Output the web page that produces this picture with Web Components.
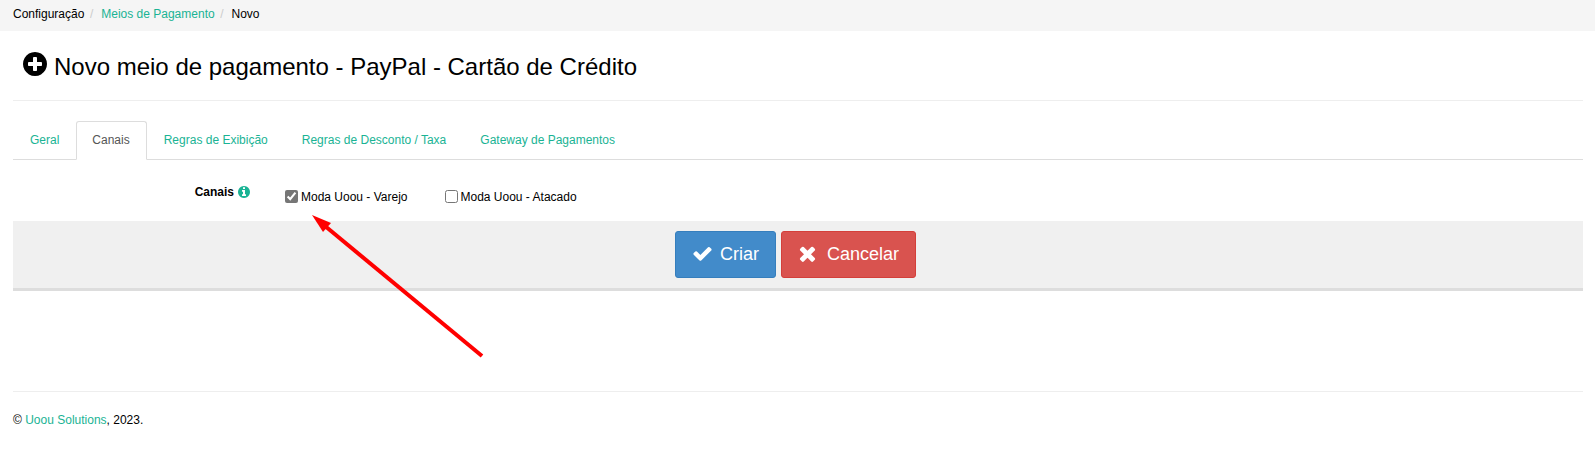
<!DOCTYPE html>
<html lang="pt-BR">
<head>
<meta charset="utf-8">
<title>Novo meio de pagamento</title>
<style>
  html, body { margin: 0; height: 100%; overflow: hidden; background: #fff; }
  body { position: relative; font: 12px/17px "Liberation Sans", Arial, sans-serif; color: #000; }
  .content { display: block; padding: 0 12px 0 13px; }
</style>
</head>
<body>
<app-breadcrumb current="Novo" root="Configuração" link="Meios de Pagamento"></app-breadcrumb>
<div class="content">
  <app-page-title>Novo meio de pagamento - PayPal - Cartão de Crédito</app-page-title>
  <app-tabs active="Canais" items="Geral|Canais|Regras de Exibição|Regras de Desconto / Taxa|Gateway de Pagamentos"></app-tabs>
  <app-channels-field label="Canais">
    <app-check checked>Moda Uoou - Varejo</app-check>
    <app-check>Moda Uoou - Atacado</app-check>
  </app-channels-field>
  <app-form-actions></app-form-actions>
  <app-footer></app-footer>
</div>
<app-arrow></app-arrow>

<script>
const ICONS = {
  plus: "M1344 960v-128q0-26-19-45t-45-19h-256v-256q0-26-19-45t-45-19h-128q-26 0-45 19t-19 45v256h-256q-26 0-45 19t-19 45v128q0 26 19 45t45 19h256v256q0 26 19 45t45 19h128q26 0 45-19t19-45v-256h256q26 0 45-19t19-45zm320-64q0 209-103 385.5t-279.5 279.5-385.5 103-385.5-103-279.5-279.5-103-385.5 103-385.5 279.5-279.5 385.5-103 385.5 103 279.5 279.5 103 385.5z",
  info: "M1152 1376v-160q0-14-9-23t-23-9h-96v-512q0-14-9-23t-23-9h-320q-14 0-23 9t-9 23v160q0 14 9 23t23 9h96v320h-96q-14 0-23 9t-9 23v160q0 14 9 23t23 9h448q14 0 23-9t9-23zm-128-896v-160q0-14-9-23t-23-9h-192q-14 0-23 9t-9 23v160q0 14 9 23t23 9h192q14 0 23-9t9-23zm640 416q0 209-103 385.5t-279.5 279.5-385.5 103-385.5-103-279.5-279.5-103-385.5 103-385.5 279.5-279.5 385.5-103 385.5 103 279.5 279.5 103 385.5z",
  check: "M1671 566q0 40-28 68l-724 724-136 136q-28 28-68 28t-68-28l-136-136-362-362q-28-28-28-68t28-68l136-136q28-28 68-28t68 28l294 295 656-657q28-28 68-28t68 28l136 136q28 28 28 68z",
  times: "M1490 1322q0 40-28 68l-136 136q-28 28-68 28t-68-28l-294-294-294 294q-28 28-68 28t-68-28l-136-136q-28-28-28-68t28-68l294-294-294-294q-28-28-28-68t28-68l136-136q28-28 68-28t68 28l294 294 294-294q28-28 68-28t68 28l136 136q28 28 28 68t-28 68l-294 294 294 294q28 28 28 68z",
};

function icon(name, size, color) {
  return `<svg width="${size}" height="${size}" viewBox="0 0 1792 1792" fill="${color}" aria-hidden="true"><path d="${ICONS[name]}"/></svg>`;
}

class AppBreadcrumb extends HTMLElement {
  constructor() {
    super();
    this.attachShadow({ mode: "open" });
  }

  connectedCallback() {
    this.shadowRoot.innerHTML = `
      <style>
        :host { display: flex; align-items: center; box-sizing: border-box; height: 31px; padding: 0 0 2px 13px; background: #f5f5f5; }
        a { color: #1ab394; text-decoration: none; }
        i { font-style: normal; color: #ccc; padding: 0 8px 0 5.5px; }
      </style>
      <span>${this.getAttribute("root")}</span><i>/</i>
      <a href="#">${this.getAttribute("link")}</a><i>/</i>
      <span>${this.getAttribute("current")}</span>
    `;
  }
}

class AppPageTitle extends HTMLElement {
  constructor() {
    super();
    this.attachShadow({ mode: "open" });
    this.shadowRoot.innerHTML = `
      <style>
        :host { display: flex; align-items: center; gap: 5px; height: 69px; padding-left: 8px; border-bottom: 1px solid #eee; }
        svg { margin-top: -3px; }
        h1 { margin: 2px 0 0; font: 500 24px/26px "Liberation Sans", Arial, sans-serif; }
      </style>
      ${icon("plus", 28, "#000")}
      <h1><slot></slot></h1>
    `;
  }
}

class AppTabs extends HTMLElement {
  constructor() {
    super();
    this.attachShadow({ mode: "open" });
  }

  connectedCallback() {
    const active = this.getAttribute("active");
    const tabs = this.getAttribute("items").split("|").map((label) =>
      `<a href="#" class="${label === active ? "active" : ""}">${label}</a>`).join("");
    this.shadowRoot.innerHTML = `
      <style>
        :host { display: flex; margin-top: 20px; border-bottom: 1px solid #ddd; height: 38px; }
        a { display: block; box-sizing: border-box; height: 39px; padding: 10px 16px; border: 1px solid transparent; border-radius: 3px 3px 0 0; color: #1ab394; text-decoration: none; }
        a:first-child { padding-left: 14px; padding-right: 17px; }
        a.active { padding-left: 15px; color: #555; background: #fff; border-color: #ddd #ddd transparent; }
      </style>
      ${tabs}
    `;
  }
}

class AppChannelsField extends HTMLElement {
  constructor() {
    super();
    this.attachShadow({ mode: "open" });
  }

  connectedCallback() {
    this.shadowRoot.innerHTML = `
      <style>
        :host { display: grid; grid-template-columns: 238px 1fr; column-gap: 34px; height: 61px; box-sizing: border-box; padding-top: 24px; }
        .label { display: flex; justify-content: flex-end; gap: 3px; font-weight: 700; height: 17px; }
        .label svg { margin-top: 1px; }
        .options { display: flex; gap: 37px; padding-top: 5px; }
      </style>
      <div class="label"><span>${this.getAttribute("label")}</span>${icon("info", 14, "#1ab394")}</div>
      <div class="options"><slot></slot></div>
    `;
  }
}

class AppCheck extends HTMLElement {
  constructor() {
    super();
    this.attachShadow({ mode: "open" });
    this.shadowRoot.innerHTML = `
      <style>
        :host { display: flex; align-items: center; gap: 3px; height: 17px; }
        input { width: 13px; height: 13px; margin: -3px 0 0; accent-color: #767676; }
      </style>
      <input type="checkbox">
      <span><slot></slot></span>
    `;
  }

  connectedCallback() {
    this.shadowRoot.querySelector("input").checked = this.hasAttribute("checked");
  }
}

class AppFormActions extends HTMLElement {
  constructor() {
    super();
    this.attachShadow({ mode: "open" });
    this.shadowRoot.innerHTML = `
      <style>
        :host { display: flex; justify-content: center; gap: 5px; padding: 10px 5px 10px 0; background: #f0f0f0; border-bottom: 3px solid #ddd; }
        button { display: flex; align-items: center; height: 47px; box-sizing: border-box; border: 1px solid; border-radius: 3px; color: #fff; font: 18px/24px "Liberation Sans", Arial, sans-serif; }
        .save { gap: 7px; padding: 0 16px 2px 16px; background: #428bca; border-color: #357ebd; }
        .cancel { gap: 7.5px; padding: 0 16px 2px 14.4px; background: #d9534f; border-color: #d43f3a; }
      </style>
      <button class="save" type="button">${icon("check", 21, "#fff")}Criar</button>
      <button class="cancel" type="button">${icon("times", 23, "#fff")}Cancelar</button>
    `;
  }
}

class AppFooter extends HTMLElement {
  constructor() {
    super();
    this.attachShadow({ mode: "open" });
    this.shadowRoot.innerHTML = `
      <style>
        :host { display: block; margin-top: 100px; padding-top: 20px; border-top: 1px solid #eee; }
        a { color: #1ab394; text-decoration: none; }
      </style>
      © <a href="#">Uoou Solutions</a>, 2023.
    `;
  }
}

class AppArrow extends HTMLElement {
  constructor() {
    super();
    this.attachShadow({ mode: "open" });
    this.shadowRoot.innerHTML = `
      <style>
        :host { position: absolute; left: 0; top: 0; width: 1595px; height: 457px; pointer-events: none; }
        svg { display: block; }
      </style>
      <svg width="1595" height="457" viewBox="0 0 1595 457">
        <path d="M482 356L325 226" stroke="#f00" stroke-width="4" fill="none"/>
        <path d="M312 215L331 223L323 232Z" fill="#f00"/>
      </svg>
    `;
  }
}

customElements.define("app-breadcrumb", AppBreadcrumb);
customElements.define("app-page-title", AppPageTitle);
customElements.define("app-tabs", AppTabs);
customElements.define("app-channels-field", AppChannelsField);
customElements.define("app-check", AppCheck);
customElements.define("app-form-actions", AppFormActions);
customElements.define("app-footer", AppFooter);
customElements.define("app-arrow", AppArrow);
</script>
</body>
</html>
